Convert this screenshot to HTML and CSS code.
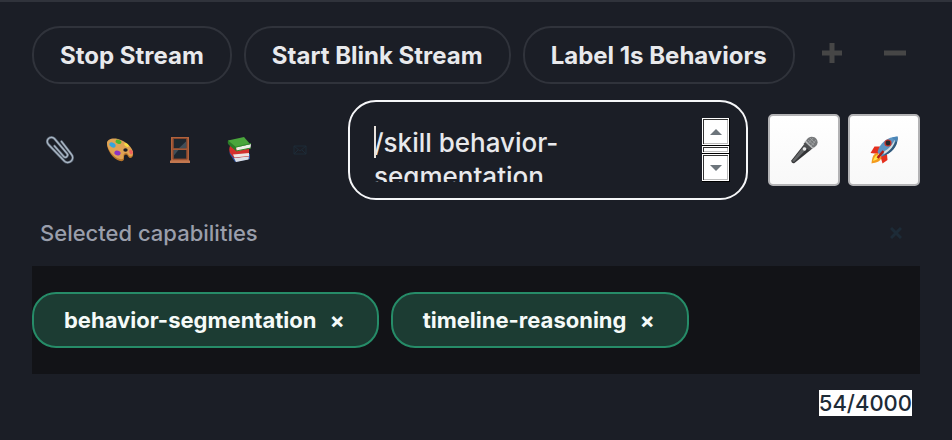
FILE: index.html
```html
<!DOCTYPE html>
<html lang="en">
<head>
    <meta charset="UTF-8">
    <meta name="viewport" content="width=device-width, initial-scale=1.0">
    <title>Chat Composer</title>
    <link rel="stylesheet" href="styles.css">
</head>
<body>

<form class="composer">
    <div class="quick-actions">
        <button type="button" class="pill">Stop Stream</button>
        <button type="button" class="pill">Start Blink Stream</button>
        <button type="button" class="pill">Label 1s Behaviors</button>
        <button type="button" class="zoom-btn" aria-label="Increase">
            <svg width="22" height="22" viewBox="0 0 22 22"><path d="M11 1v20M1 11h20" stroke="currentColor" stroke-width="5"/></svg>
        </button>
        <button type="button" class="zoom-btn" aria-label="Decrease">
            <svg width="22" height="22" viewBox="0 0 22 22"><path d="M0 11h22" stroke="currentColor" stroke-width="5"/></svg>
        </button>
    </div>

    <div class="input-row">
        <div class="tools">
            <button type="button" class="tool" aria-label="Attach file">
                <svg width="28" height="28" viewBox="0 0 28 28" fill="none" stroke-linecap="round">
                    <path d="M15.500 5.500l10 13a4.700 4.700 0 0 1-7.400 6.300L2.500 8.500a3.700 3.700 0 0 1 5.800-6L21 17.500a2.200 2.200 0 0 1-3.400 2.900L8.500 10" stroke="#5c6775" stroke-width="2.600"/>
                    <path d="M15.500 5.500l10 13a4.700 4.700 0 0 1-7.400 6.300L2.500 8.500a3.700 3.700 0 0 1 5.800-6L21 17.500a2.200 2.200 0 0 1-3.400 2.900L8.500 10" stroke="#a9b6c4" stroke-width="1.300"/>
                </svg>
            </button>
            <button type="button" class="tool" aria-label="Image">
                <svg width="28" height="28" viewBox="0 0 28 28">
                    <path d="M1 8C1 4 6 2 12 4c8 2 14 8 15 13 .5 3-1 5-3 5-2-.2-2-3.500-4-3.500-2.400 0-2 3-2 4.500s-1.500 2.500-4 2C7 23.500 1 14 1 8z" fill="#b9752a"/>
                    <path d="M1 7C1 3.500 6 1.500 12 3c8 2 14 8 15 13 .3 2.500-1 4.500-2.700 4.500-2-.3-2-3.500-4.300-3.500-3 0-2.500 3-2.500 4.500S16 23.500 14 23C7 21.500 1 13 1 7z" fill="#dfa354"/>
                    <ellipse cx="19.500" cy="14" rx="2.200" ry="1.700" fill="#1b1e26"/>
                    <ellipse cx="6.500" cy="9" rx="3.300" ry="2.300" transform="rotate(30 6.500 9)" fill="#35a4dd"/>
                    <ellipse cx="12.500" cy="5.800" rx="3" ry="2" transform="rotate(20 12.500 5.800)" fill="#4db52d"/>
                    <ellipse cx="20.500" cy="9" rx="2.600" ry="1.500" transform="rotate(35 20.500 9)" fill="#f8dd42"/>
                    <ellipse cx="25" cy="16" rx="1.700" ry="2.400" transform="rotate(-25 25 16)" fill="#f0625c"/>
                    <ellipse cx="11.500" cy="17" rx="3.200" ry="2.300" transform="rotate(15 11.500 17)" fill="#8c35c4"/>
                </svg>
            </button>
            <button type="button" class="tool" aria-label="Window">
                <svg width="28" height="28" viewBox="0 0 28 28">
                    <path d="M5 1h18v24H5z" fill="#b2633d"/>
                    <path d="M7.500 3h13v9.500h-13zM7.500 14h13v9h-13z" fill="#1d2730"/>
                    <path d="M20.500 5v7.500h-8zM7.500 14h5l-5 6z" fill="#414e58"/>
                    <path d="M7 2.500h14V23H7z" fill="none" stroke="#85452b"/>
                    <path d="M7 12.500h14V14H7z" fill="#a65835"/>
                    <path d="M4 24.500h20V27H4z" fill="#c37850"/>
                </svg>
            </button>
            <button type="button" class="tool" aria-label="Library">
                <svg width="28" height="28" viewBox="0 0 28 28">
                    <path d="M4 15c-1 2 0 4 1 5l4 6 15-3v-5z" fill="#2a4f9d"/>
                    <path d="M8 22l15-2-.5 3.500L10 26z" fill="#dce0e7"/>
                    <path d="M4 10c-1 2-1 5 0 7l4 5 15-1.500V13z" fill="#d3302d"/>
                    <path d="M7 18.500L23 17v3L8.500 21.500z" fill="#ece5e2"/>
                    <path d="M2 4.500L18 1l6 7-14 4-7-5z" fill="#4aa63c"/>
                    <path d="M2 4.500c-.7 2 0 4 1.500 5L10 15V11z" fill="#2b7c28"/>
                    <path d="M10 11.500l15-3.500-.5 4L11 15z" fill="#edf0e7"/>
                    <path d="M10 11l15-3.500M10 15l15-3" stroke="#318b2b"/>
                </svg>
            </button>
            <button type="button" class="tool tool-dim" aria-label="Message">
                <svg width="14" height="12" viewBox="0 0 14 12" fill="none" stroke="currentColor"><path d="M1 2h12v8H1zM1 2l6 5 6-5M1 10l4-4M13 10L9 6"/></svg>
            </button>
        </div>

        <div class="message-box">
            <textarea class="message" id="message" aria-label="Message" spellcheck="false">/skill behavior-segmentation</textarea>
            <span class="caret"></span>
            <div class="scrollbar">
                <button type="button" class="scroll-btn" aria-label="Scroll up">
                    <svg width="12" height="6" viewBox="0 0 12 6"><path d="M0 6l6-6 6 6z" fill="currentColor"/></svg>
                </button>
                <div class="scroll-thumb"></div>
                <button type="button" class="scroll-btn" aria-label="Scroll down">
                    <svg width="12" height="6" viewBox="0 0 12 6"><path d="M0 0h12L6 6z" fill="currentColor"/></svg>
                </button>
            </div>
        </div>

        <div class="send-group">
            <button type="button" class="square-btn" aria-label="Record voice">
                <svg width="28" height="28" viewBox="0 0 28 28">
                    <path d="M14 8.500l6 6L4.500 27c-1.500 1-4-1-3-2.800z" fill="#333436"/>
                    <path d="M14 10l3 2.500L4 26l-2-1z" fill="#66686a"/>
                    <path d="M13.500 8l2.500-3 7 7-3.500 3z" fill="#4c4d4f"/>
                    <path d="M16 4.500C18 0 24-.5 26.500 3S27 11 22.500 12z" fill="#77797b"/>
                    <path d="M15 5l8 7.500" stroke="#b9bbbc" stroke-width="1.500"/>
                    <path d="M18 4l6 5M20 2l5 5M18 8l5-6M21 10l5-6" stroke="#a1a3a5" stroke-width=".8"/>
                    <circle cx="14.500" cy="13" r="1.800" fill="#e7e7e7"/>
                </svg>
            </button>
            <button type="submit" class="square-btn" aria-label="Send">
                <svg width="28" height="28" viewBox="0 0 28 28">
                    <path d="M10 10.500H4.500L.5 17l8 1zM17 18l.5 6-5 3.500-2-7z" fill="#e5301e"/>
                    <path d="M7 17c-4 1-5 5-5.500 10.500 5-1 9-2 10-6z" fill="#f49b1c"/>
                    <path d="M7 19c-2 1-3 3-4 6 3-1 5-2 6-4z" fill="#ffe94c"/>
                    <path d="M7.500 16C10 7 17 1 27.500 .5c.5 8-5 17-16 20z" fill="#5c94c2"/>
                    <path d="M11.500 20.500C19 16 25 9 27.500 .5c1 9-5 17-16 20z" fill="#315a7c"/>
                    <path d="M13 16c6-3 10-8 12-13 0 6-5 12-11 15z" fill="#d6dfdf"/>
                    <path d="M22 1.800c1.500-.8 3.500-1.200 5.500-1.300 0 2-.3 4-1 5.500z" fill="#4b86b8"/>
                    <circle cx="18" cy="7" r="3.600" fill="#c9342a"/>
                    <circle cx="18" cy="7" r="2.400" fill="#26272b"/>
                    <path d="M13.500 15l-6 7" stroke="#b41d16" stroke-width="2.500"/>
                </svg>
            </button>
        </div>
    </div>

    <div class="caps-header">
        <span class="caps-title">Selected capabilities</span>
        <button type="button" class="caps-close" aria-label="Clear capabilities">
            <svg width="12" height="12" viewBox="0 0 12 12"><path d="M1 1l10 10M11 1L1 11" stroke="currentColor" stroke-width="3"/></svg>
        </button>
    </div>

    <div class="caps-list">
        <button type="button" class="chip">behavior-segmentation <span class="chip-x">×</span></button>
        <button type="button" class="chip">timeline-reasoning <span class="chip-x">×</span></button>
    </div>

    <div class="footer">
        <span class="counter">54/4000</span>
    </div>
</form>

</body>
</html>
```
FILE: styles.css
```css
* {
    box-sizing: border-box;
}

body {
    margin: 0;
    min-height: 100vh;
    background-color: #1b1e26;
    color: #e8e9ec;
    font-family: Inter, "Liberation Sans", sans-serif;
}

button {
    font-family: inherit;
    cursor: pointer;
}

svg {
    display: block;
}

.composer {
    border-top: 2px solid #30333b;
    padding: 24px 32px;
}

.quick-actions {
    display: flex;
    align-items: center;
    gap: 12px;
}

.pill {
    height: 58px;
    padding: 0 26px;
    border: 2px solid #30333b;
    border-radius: 28px;
    background: transparent;
    color: #e8e9ec;
    font-size: 24px;
    font-weight: 700;
    white-space: nowrap;
}

.zoom-btn {
    display: flex;
    flex: 1;
    align-items: center;
    justify-content: center;
    height: 58px;
    padding: 0 0 4px;
    border: none;
    background: transparent;
    color: #464646;
}

.input-row {
    display: flex;
    align-items: center;
    gap: 20px;
    margin-top: 16px;
}

.tools {
    display: flex;
    gap: 4px;
}

.tool {
    display: flex;
    align-items: center;
    justify-content: center;
    width: 56px;
    height: 56px;
    padding: 0;
    border: none;
    background: transparent;
}

.tool-dim {
    color: #1d2b37;
}

.message-box {
    position: relative;
    display: flex;
    flex: 1;
    min-width: 0;
    padding: 16px 16px 16px 24px;
    border: 2px solid #f5f6f8;
    border-radius: 28px;
}

.message {
    flex: 1;
    min-width: 0;
    height: 64px;
    padding: 8px 0 0;
    border: none;
    outline: none;
    resize: none;
    overflow: hidden;
    background: transparent;
    color: #e8e9ec;
    font-family: inherit;
    font-size: 26px;
    font-weight: 500;
    line-height: 34px;
}

.caret {
    position: absolute;
    left: 24px;
    top: 24px;
    width: 2px;
    height: 32px;
    background-color: #e8e2dc;
}

.scrollbar {
    display: flex;
    flex-direction: column;
    width: 28px;
    height: 64px;
    background-color: #000;
}

.scroll-btn {
    display: flex;
    flex: 1;
    align-items: center;
    justify-content: center;
    margin: 0 1px 1px 0;
    padding: 0;
    border: 1px solid #fff;
    border-radius: 0;
    background-color: #fff;
    box-shadow: inset 1px 1px #333, inset -1px -1px #bbb;
    color: #6d757b;
}

.scroll-thumb {
    height: 7px;
    margin: 0 1px 1px 0;
    border: 1px solid #fff;
    background-color: #fff;
    box-shadow: inset 1px 1px #333, inset -1px -1px #bbb;
}

.send-group {
    display: flex;
    gap: 8px;
}

.square-btn {
    display: flex;
    align-items: center;
    justify-content: center;
    width: 72px;
    height: 72px;
    padding: 0;
    border: 2px solid #b3b3b5;
    border-radius: 5px;
    background: linear-gradient(#fff, #f8f8f8);
}

.caps-header {
    display: flex;
    align-items: center;
    justify-content: space-between;
    height: 66px;
    padding: 0 18px 0 8px;
}

.caps-title {
    color: #9a9eab;
    font-size: 22px;
    font-weight: 500;
}

.caps-close {
    padding: 0;
    border: none;
    background: transparent;
    color: #1d2b37;
}

.caps-list {
    display: flex;
    gap: 12px;
    padding: 26px 0;
    background-color: #121317;
}

.chip {
    height: 56px;
    padding: 0 32px 0 30px;
    border: 2px solid #268c68;
    border-radius: 24px;
    background-color: #1c3c33;
    color: #f5faf8;
    font-size: 22px;
    font-weight: 700;
    white-space: nowrap;
}

.chip-x {
    margin-left: 8px;
}

.footer {
    display: flex;
    justify-content: flex-end;
    padding: 16px 8px 0;
}

.counter {
    background-color: #fff;
    color: #1d2b37;
    font-size: 22px;
    font-weight: 500;
    line-height: 26px;
}
```
